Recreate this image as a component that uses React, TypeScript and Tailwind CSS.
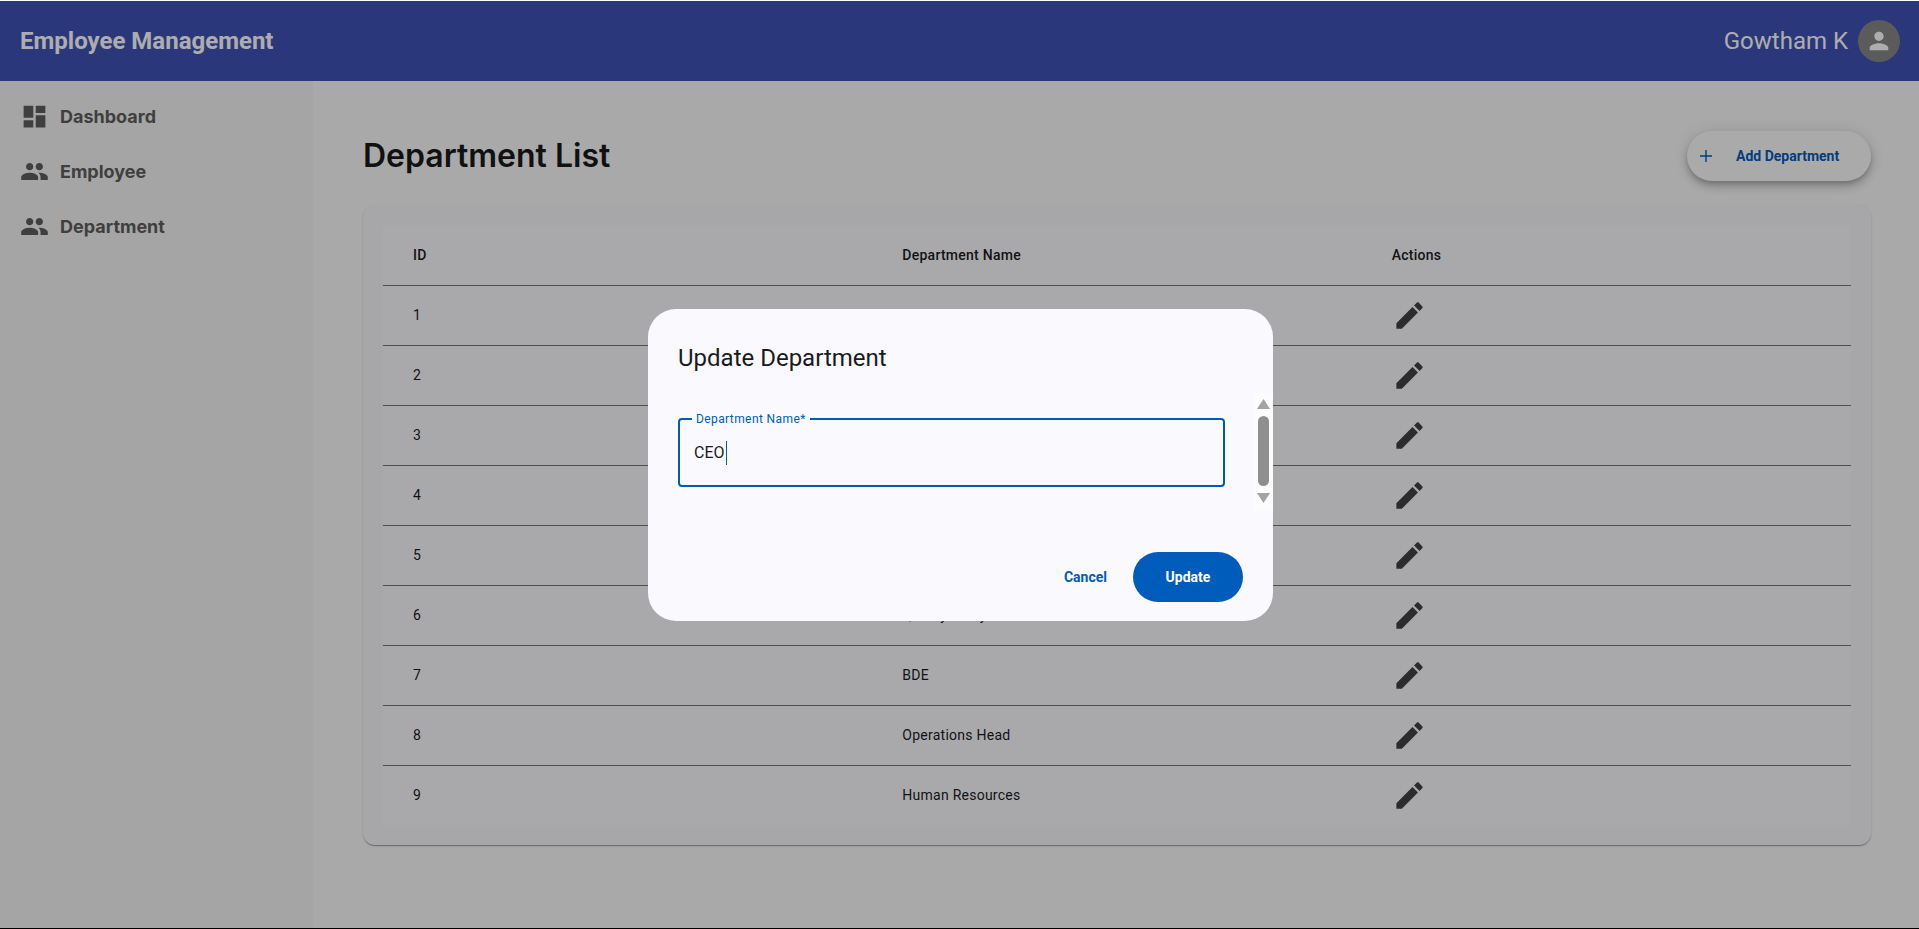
const departments = [
  "CEO",
  "CTO",
  "Project Manager",
  "Team Lead",
  "Software Developer",
  "Quality Analyst",
  "BDE",
  "Operations Head",
  "Human Resources",
];

const DashboardIcon = () => (
  <svg viewBox="0 0 24 24" className="h-[29px] w-[29px] shrink-0 fill-current">
    <path d="M3 13h8V3H3v10zm0 8h8v-6H3v6zm10 0h8V11h-8v10zm0-18v6h8V3h-8z" />
  </svg>
);

const PeopleIcon = () => (
  <svg viewBox="0 0 24 24" className="h-[29px] w-[29px] shrink-0 fill-current">
    <path d="M16 11c1.66 0 2.99-1.34 2.99-3S17.66 5 16 5c-1.66 0-3 1.34-3 3s1.34 3 3 3zm-8 0c1.66 0 2.99-1.34 2.99-3S9.66 5 8 5C6.34 5 5 6.34 5 8s1.34 3 3 3zm0 2c-2.33 0-7 1.17-7 3.5V19h14v-2.5c0-2.33-4.67-3.5-7-3.5zm8 0c-.29 0-.62.02-.97.05 1.16.84 1.97 1.97 1.97 3.45V19h6v-2.5c0-2.33-4.67-3.5-7-3.5z" />
  </svg>
);

const EditIcon = () => (
  <svg viewBox="0 0 24 24" className="h-[35px] w-[35px] fill-[#424242]">
    <path d="M3 17.25V21h3.75L17.81 9.94l-3.75-3.75L3 17.25zM20.71 7.04c.39-.39.39-1.02 0-1.41l-2.34-2.34c-.39-.39-1.02-.39-1.41 0l-1.83 1.83 3.75 3.75 1.83-1.83z" />
  </svg>
);

const navItems = [
  { label: "Dashboard", icon: <DashboardIcon /> },
  { label: "Employee", icon: <PeopleIcon /> },
  { label: "Department", icon: <PeopleIcon /> },
];

export default function App() {
  return (
    <div className="relative flex h-[929px] flex-col overflow-hidden border-t border-b border-t-white border-b-black bg-[#fafafa] font-['Roboto',sans-serif]">
      {/* header */}
      <header className="flex h-[80px] shrink-0 items-center justify-between bg-[#3f51b5] pl-5 pr-[19px] text-white">
        <h1 className="text-2xl font-bold">Employee Management</h1>
        <div className="flex items-center gap-[10px]">
          <span className="text-2xl">Gowtham K</span>
          <div className="flex h-[42px] w-[42px] items-center justify-center rounded-full bg-[#878787]">
            <svg viewBox="0 0 24 24" className="h-[28px] w-[28px] fill-white">
              <path d="M12 12c2.21 0 4-1.79 4-4s-1.79-4-4-4-4 1.79-4 4 1.79 4 4 4zm0 2c-2.67 0-8 1.34-8 4v2h16v-2c0-2.66-5.33-4-8-4z" />
            </svg>
          </div>
        </div>
      </header>

      <div className="flex min-h-0 flex-1">
        {/* sidebar */}
        <aside className="flex w-[313px] shrink-0 flex-col gap-[26px] bg-[#f4f4f4] pl-[20px] pt-[21px] font-['Inter',sans-serif] text-[#5e5e5e]">
          {navItems.map((item) => (
            <div key={item.label} className="flex h-[29px] items-center gap-[11px]">
              {item.icon}
              <span className="text-[18px] font-bold">{item.label}</span>
            </div>
          ))}
        </aside>

        {/* main */}
        <main className="min-w-0 flex-1 pl-[50px] pr-[48px] pt-[50px]">
          <div className="flex h-[50px] items-center justify-between">
            <h2 className="font-['Inter',sans-serif] text-[32px] font-semibold text-[#1a1a1a]">Department List</h2>
            <button className="flex h-[50px] w-[184px] items-center rounded-full bg-[#fbfbfc] pl-[13px] text-sm font-bold text-[#005cbb] shadow-[0_3px_5px_-1px_rgba(0,0,0,0.2),0_6px_10px_0_rgba(0,0,0,0.14),0_1px_18px_0_rgba(0,0,0,0.12)]">
              <svg viewBox="0 0 12 12" className="h-3 w-3 stroke-current" fill="none" strokeWidth="1.4">
                <path d="M6 0v12M0 6h12" />
              </svg>
              <span className="ml-[24px]">Add Department</span>
            </button>
          </div>

          <div className="mt-6 rounded-xl bg-[#f7f7f9] p-5 shadow-[0_2px_1px_-1px_rgba(0,0,0,0.2),0_1px_1px_0_rgba(0,0,0,0.14),0_1px_3px_0_rgba(0,0,0,0.12)]">
            <table className="w-full table-fixed bg-[#fafafc] text-sm tracking-[0.25px] text-[#1a1b1f]">
              <thead>
                <tr className="h-[60px] border-b border-[#757575] text-left">
                  <th className="pl-[30px] font-medium">ID</th>
                  <th className="pl-[30px] font-medium">Department Name</th>
                  <th className="pl-[30px] font-medium">Actions</th>
                </tr>
              </thead>
              <tbody>
                {departments.map((name, i) => (
                  <tr key={name} className="h-[60px] border-b border-[#757575] last:border-b-0">
                    <td className="pl-[30px]">{i + 1}</td>
                    <td className="pl-[30px]">{name}</td>
                    <td className="pl-[30px]">
                      <div className="flex">
                        <EditIcon />
                      </div>
                    </td>
                  </tr>
                ))}
              </tbody>
            </table>
          </div>
        </main>
      </div>

      {/* dialog */}
      <div className="absolute inset-0 flex items-start justify-center bg-black/32 pl-[2px]">
        <div className="relative mt-[308px] h-[312px] w-[625px] rounded-[28px] bg-[#faf9fe] pl-[30px] pt-[33px] text-[#1a1b1f]">
          <h3 className="text-2xl leading-8">Update Department</h3>

          <div className="relative mt-[44px] flex h-[69px] w-[547px] items-center rounded border-2 border-[#005cbb] pl-[14px] text-base">
            <span className="absolute -top-[9px] left-[12px] bg-[#faf9fe] px-[4px] text-xs leading-4 tracking-[0.4px] text-[#005cbb]">
              Department Name*
            </span>
            <span>CEO</span>
            <span className="ml-px h-[24px] w-px bg-[#005cbb]" />
          </div>

          {/* scrollbar */}
          <div className="absolute right-0 top-[84px] flex h-[116px] w-[19px] flex-col items-center justify-between bg-[#fcfcfc] py-[6px]">
            <svg viewBox="0 0 13 10" className="h-[10px] w-[13px] fill-[#a3a3a3]">
              <path d="M6.5 0L13 10H0z" />
            </svg>
            <div className="h-[70px] w-[11px] rounded-full bg-[#8f8f8f]" />
            <svg viewBox="0 0 13 10" className="h-[10px] w-[13px] fill-[#a3a3a3]">
              <path d="M0 0h13L6.5 10z" />
            </svg>
          </div>

          <div className="absolute bottom-[19px] right-[30px] flex items-center gap-[26px] text-sm font-bold">
            <span className="text-[#005cbb]">Cancel</span>
            <button className="h-[50px] w-[110px] rounded-full bg-[#005cbb] text-white">Update</button>
          </div>
        </div>
      </div>
    </div>
  );
}
